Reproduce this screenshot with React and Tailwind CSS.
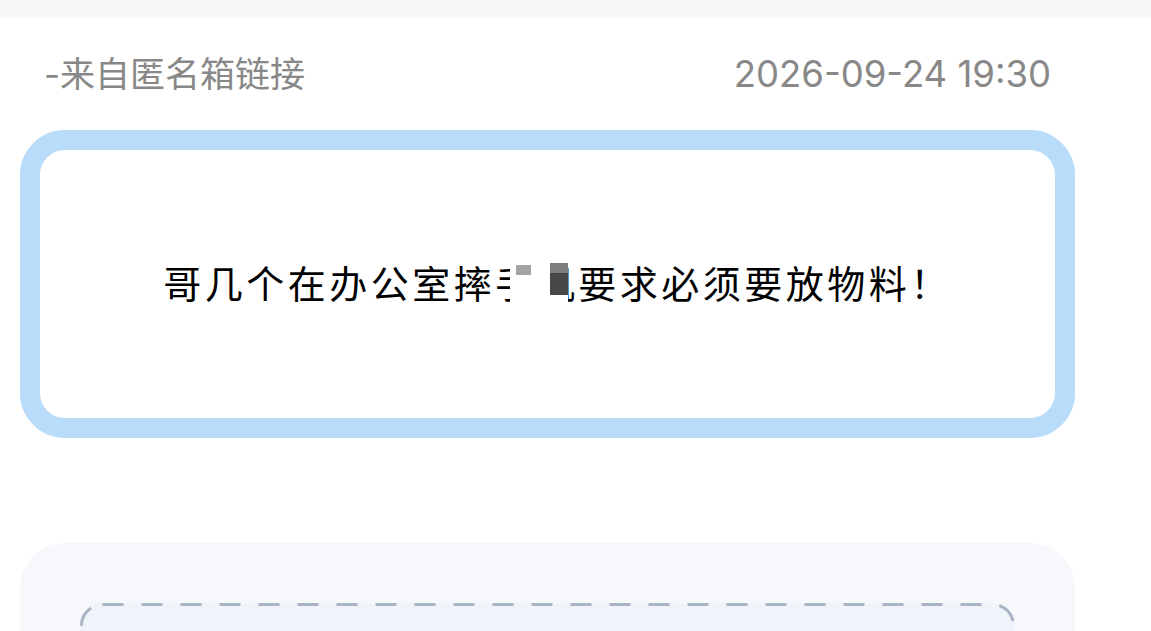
import React from "react";

const cjk = { fontFamily: 'Inter, "Noto Sans CJK SC", sans-serif' };

// mosaic patch that hides part of the message
const Censored = () => (
  <span className="absolute left-[15px] top-[-4px] h-[50px] w-[58px] bg-white">
    <span className="absolute left-[6px] top-[8px] h-[10px] w-[15px] bg-[#a3a3a3]" />
    <span className="absolute left-[40px] top-[6px] h-[10px] w-[18px] bg-[#7d7d7d]" />
    <span className="absolute left-[40px] top-[16px] h-[22px] w-[18px] bg-[#474747]" />
  </span>
);

const App = () => {
  return (
    <div className="min-h-screen w-full bg-white" style={cjk}>
      <div className="h-[18px] bg-[#f7f7f7]" />
      <div className="ml-[20px] w-[1055px]">
        <div className="flex h-[112px] items-center justify-between px-[24px] text-[#888888]">
          <span className="text-[35px] leading-none">-来自匿名箱链接</span>
          <span className="text-[36.5px] leading-none">2026-09-24 19:30</span>
        </div>

        <div className="flex h-[308px] items-center justify-center rounded-[45px] border-[20px] border-[#b8dcfa] bg-white pl-[20px]">
          <p className="text-[38px] leading-none tracking-[3.5px] text-black">
            哥几个在办公室摔
            <span className="relative">
              手机
              <Censored />
            </span>
            要求必须要放物料！
          </p>
        </div>

        <div className="mt-[105px] rounded-t-[45px] bg-[#f6f8fc] px-[60px] pt-[60px]">
          <div className="relative h-[120px] rounded-[22px] bg-[#eff4fb]">
            <svg className="absolute inset-0 h-full w-full" preserveAspectRatio="none">
              <rect
                x="1.5"
                y="1.5"
                width="calc(100% - 3px)"
                height="calc(100% - 3px)"
                rx="21"
                fill="none"
                stroke="#a9b5c4"
                strokeWidth="3"
                strokeDasharray="21 18"
              />
            </svg>
          </div>
        </div>
      </div>
    </div>
  );
};

export default App;
